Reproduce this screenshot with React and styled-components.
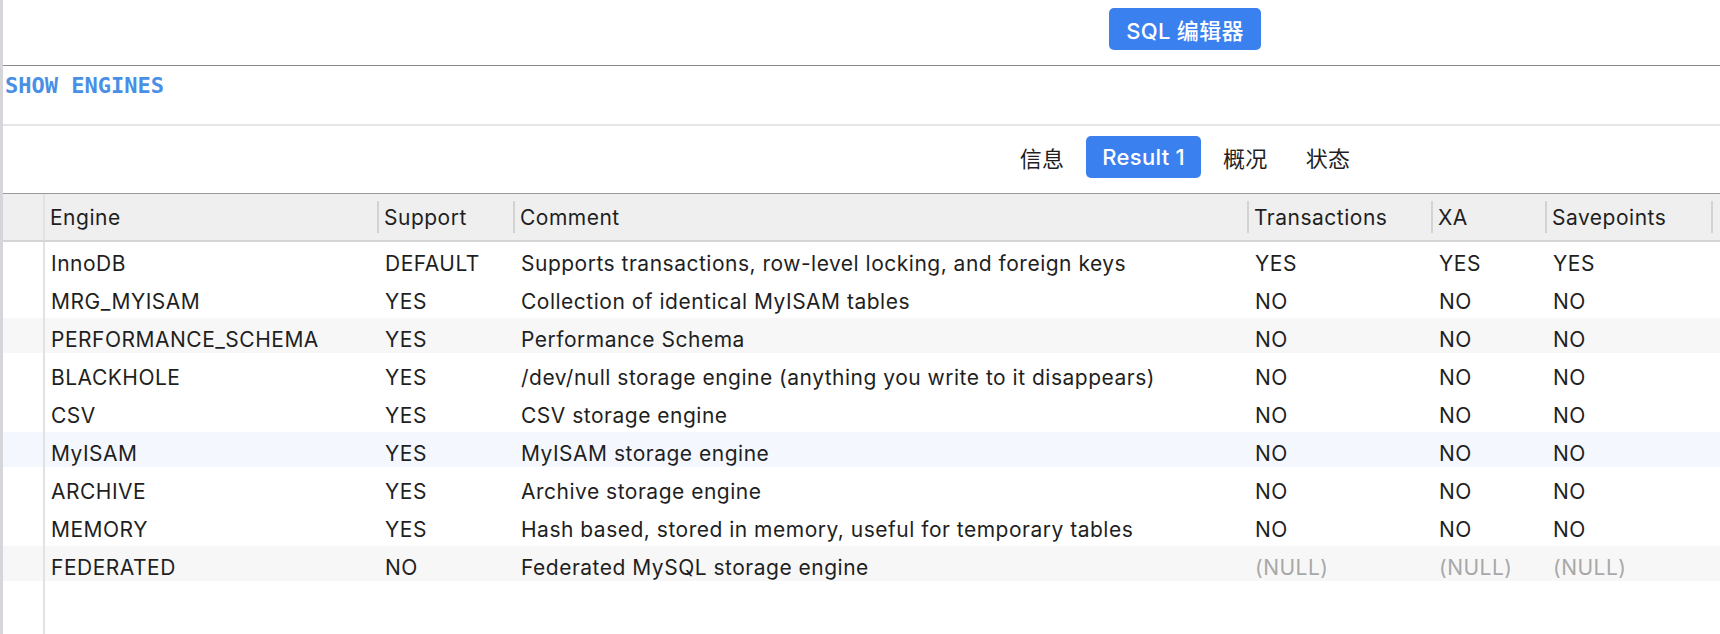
import styled, { createGlobalStyle } from 'styled-components';

const Global = createGlobalStyle`
  html, body { margin: 0; padding: 0; background: #fff; }
  body { font-family: Inter, "Noto Sans CJK SC", sans-serif; color: #1f1f1f; }
`;

const Frame = styled.div`
  border-left: 3px solid #d6d6da;
  min-height: 100vh;
  box-sizing: border-box;
  display: flex;
  flex-direction: column;
`;

const TopBar = styled.div`
  height: 66px;
  border-bottom: 1px solid #8a8a8a;
  display: flex;
  justify-content: center;
  align-items: flex-start;
  padding: 8px 0 0 647px;
  box-sizing: border-box;
`;

const BlueButton = styled.div`
  height: 42px;
  padding: 0 17px;
  border-radius: 5px;
  background: #3b80ef;
  color: #fff;
  font-size: 22px;
  letter-spacing: 0.3px;
  font-weight: 500;
  display: flex;
  align-items: center;
`;

const Editor = styled.div`
  height: 60px;
  border-bottom: 2px solid #e6e6e6;
  padding: 7px 0 0 2px;
  box-sizing: border-box;
  font-family: "DejaVu Sans Mono", monospace;
  font-weight: bold;
  font-size: 22px;
  line-height: 26px;
  color: #4a8fe6;
`;

const TabBar = styled.div`
  height: 68px;
  border-bottom: 1px solid #9a9a9a;
  display: flex;
  justify-content: center;
  align-items: flex-start;
  gap: 6px;
  padding: 10px 0 0 647px;
  box-sizing: border-box;
`;

const Tab = styled.div`
  height: 42px;
  padding: 0 16px;
  border-radius: 5px;
  font-size: 22px;
  letter-spacing: 0.3px;
  display: flex;
  align-items: center;
  background: ${p => (p.active ? '#3b80ef' : 'transparent')};
  color: ${p => (p.active ? '#fff' : '#1f1f1f')};
  font-weight: ${p => (p.active ? 500 : 400)};
`;

const Grid = styled.div`
  flex: 1;
  display: flex;
  flex-direction: column;
`;

const HeadRow = styled.div`
  display: flex;
  height: 48px;
  background: #efefef;
  border-bottom: 2px solid #d4d4d4;
  box-sizing: border-box;
`;

const IndexCell = styled.div`
  width: 42px;
  flex: none;
  border-right: 2px solid #e2e2e2;
  box-sizing: border-box;
`;

const HeadCell = styled.div`
  width: ${p => p.w}px;
  flex: none;
  height: 32px;
  align-self: center;
  border-right: 2px solid #d3d3d3;
  box-sizing: border-box;
  padding: 0 5px;
  display: flex;
  align-items: center;
  font-size: 21px;
  letter-spacing: 0.5px;
  white-space: nowrap;
  color: #1f1f1f;
`;

const Row = styled.div`
  display: flex;
  height: 38px;
  background: ${p => p.bg ? `linear-gradient(${p.bg} 0 35px, transparent 35px)` : 'none'};
`;

const Cell = styled.div`
  width: ${p => p.w}px;
  flex: none;
  box-sizing: border-box;
  padding: 4px 6px 0;
  display: flex;
  align-items: center;
  font-size: 21px;
  letter-spacing: 0.5px;
  white-space: nowrap;
  color: ${p => (p.muted ? '#a8a8a8' : '#1f1f1f')};
`;

const Filler = styled.div`
  flex: 1;
  display: flex;
`;

const widths = [334, 136, 734, 184, 114, 166];
const columns = ['Engine', 'Support', 'Comment', 'Transactions', 'XA', 'Savepoints'];

const rows = [
  ['InnoDB', 'DEFAULT', 'Supports transactions, row-level locking, and foreign keys', 'YES', 'YES', 'YES'],
  ['MRG_MYISAM', 'YES', 'Collection of identical MyISAM tables', 'NO', 'NO', 'NO'],
  ['PERFORMANCE_SCHEMA', 'YES', 'Performance Schema', 'NO', 'NO', 'NO'],
  ['BLACKHOLE', 'YES', '/dev/null storage engine (anything you write to it disappears)', 'NO', 'NO', 'NO'],
  ['CSV', 'YES', 'CSV storage engine', 'NO', 'NO', 'NO'],
  ['MyISAM', 'YES', 'MyISAM storage engine', 'NO', 'NO', 'NO'],
  ['ARCHIVE', 'YES', 'Archive storage engine', 'NO', 'NO', 'NO'],
  ['MEMORY', 'YES', 'Hash based, stored in memory, useful for temporary tables', 'NO', 'NO', 'NO'],
  ['FEDERATED', 'NO', 'Federated MySQL storage engine', null, null, null],
];

const rowBg = i => {
  if (i === 5) return '#f4f8fe';
  if (i % 3 === 2) return '#f7f7f7';
  return null;
};

export default function App() {
  return (
    <>
      <Global />
      <Frame>
        <TopBar>
          <BlueButton>SQL 编辑器</BlueButton>
        </TopBar>
        <Editor>SHOW ENGINES</Editor>
        <TabBar>
          <Tab>信息</Tab>
          <Tab active>Result 1</Tab>
          <Tab>概况</Tab>
          <Tab>状态</Tab>
        </TabBar>
        <Grid>
          <HeadRow>
            <IndexCell />
            {columns.map((c, i) => (
              <HeadCell key={c} w={widths[i]}>{c}</HeadCell>
            ))}
          </HeadRow>
          {rows.map((r, ri) => (
            <Row key={r[0]} bg={rowBg(ri)}>
              <IndexCell />
              {r.map((v, ci) => (
                <Cell key={ci} w={widths[ci]} muted={v === null}>
                  {v === null ? '(NULL)' : v}
                </Cell>
              ))}
            </Row>
          ))}
          <Filler>
            <IndexCell />
          </Filler>
        </Grid>
      </Frame>
    </>
  );
}
